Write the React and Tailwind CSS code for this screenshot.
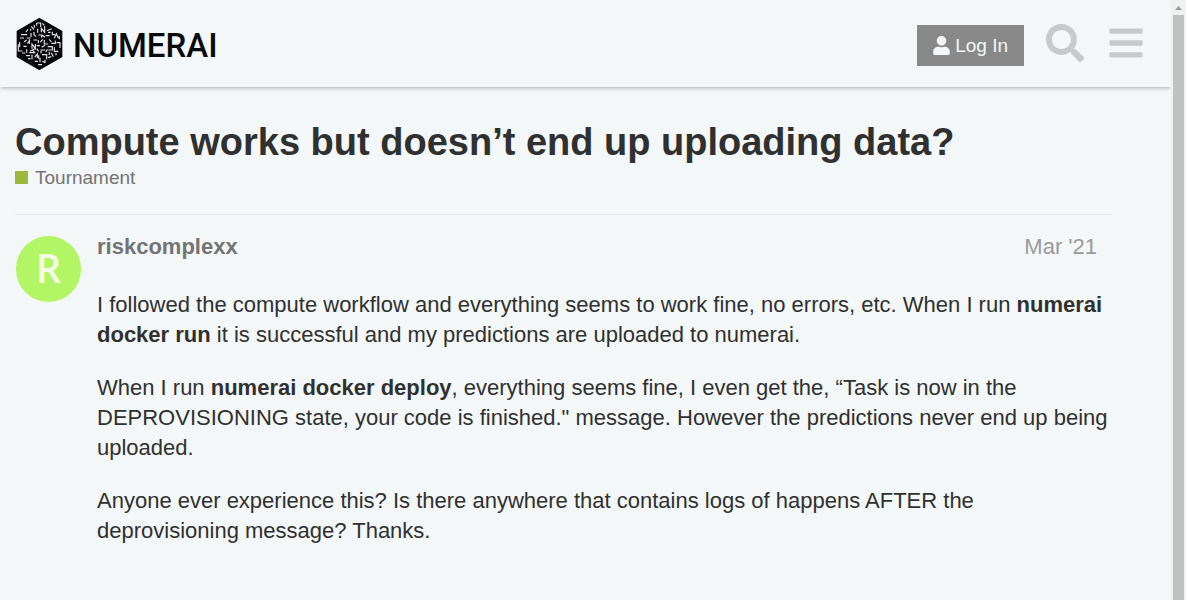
import React from "react";
import { FaUser, FaSearch, FaBars } from "react-icons/fa";

function LogoMark() {
  return (
    <svg viewBox="18 12 141 156" className="h-[52px] w-[47px]" aria-hidden="true">
      <path
        d="M88 14 155 52V128L88 166 22 128V52Z"
        fill="#050708"
        stroke="#050708"
        strokeWidth="4"
        strokeLinejoin="round"
      />
      <path
        d="M80 27h12v12M80 27v8M73 33v8M64 37l8 10M62 44v6M97 28l6 6M104 36v8M94 55V43l10 12V43M83 44v12M111 50l14-6M114 55h8M33 62h18M54 46l-6 8M30 72h12M50 72h12M63 57v12M72 54v8l6 6M85 63h10v8M97 64l8 6M107 65h12M127 53v9h8M133 73l6-14 6 14M148 66v10M29 100V84M25 91v20h12M40 97h10M42 84l8-6M52 88l8-10M58 76v14M66 104V90l10 14V90M70 78h12M85 78v10M91 84l8-8M103 78v12h12M118 76l6 8M124 88h12v-8M140 86h10v16M80 95h10M95 100l10-6M92 108h14M113 98h14v10h-12M133 100v12h12M112 106l-4 8M60 112l14-8M36 117h10M50 106v10M58 116h16l-6-8M80 104l6 8M93 118v-8M96 122h14v14M118 113v10M124 116l6 12M138 116v8M48 125h12M66 122v14M74 130l8-10v12M86 124v10M54 134h8M74 142h10M90 131v14M97 142l8 4M114 131l10-3M84 152h12M105 137v10"
        fill="none"
        stroke="#dfe2e3"
        strokeWidth="3.5"
      />
    </svg>
  );
}

function Header() {
  return (
    <header className="flex h-[87px] items-center justify-between pl-4 pr-[26px] shadow-[0_2px_4px_-1px_rgba(0,0,0,0.3)]">
      <a href="/" className="flex items-center gap-2.5 text-[#080a0b]" aria-label="Numerai">
        <LogoMark />
        <span className="pt-1 font-[Roboto,sans-serif] text-[33px] font-medium leading-none">NUMERAI</span>
      </a>
      <div className="flex items-center gap-[22px]">
        <button
          type="button"
          className="mt-1 flex h-[41px] items-center gap-[5px] bg-[#888888] px-4 text-[19px] text-[#f3f7f8]"
        >
          <FaUser className="h-[19px] w-[17px]" aria-hidden="true" />
          <span className="pt-px">Log In</span>
        </button>
        <div className="flex items-center gap-[23px] pb-px">
          <button type="button" aria-label="Search" className="text-[#c7c9ca]">
            <FaSearch className="size-[38px]" />
          </button>
          <button type="button" aria-label="Menu" className="text-[#c7c9ca]">
            <FaBars className="size-[38px]" />
          </button>
        </div>
      </div>
    </header>
  );
}

function Post() {
  return (
    <article className="flex gap-4 border-t border-[#e6e8e9] pt-[21px]">
      <div className="ml-px flex h-[66px] w-[65px] shrink-0 items-center justify-center rounded-full bg-[#b3f665] pb-0.5 font-['Open_Sans',sans-serif] text-[40px] font-semibold leading-[64px] text-[#f2fde6]">
        R
      </div>
      <div className="min-w-0 flex-1">
        <div className="flex h-5 items-center justify-between pr-[15px] text-[22px]">
          <a href="/u/riskcomplexx" className="font-bold text-[#737474]">
            riskcomplexx
          </a>
          <a href="#post-1" className="text-[#999b9b]">
            Mar '21
          </a>
        </div>
        <div className="flex flex-col gap-[23px] pt-[34px] text-[22px] leading-[30px]">
          <p>
            I followed the compute workflow and everything seems to work fine, no errors, etc. When I run{" "}
            <strong>numerai docker run</strong> it is successful and my predictions are uploaded to numerai.
          </p>
          <p>
            When I run <strong>numerai docker deploy</strong>, everything seems fine, I even get the, “Task is now in
            the DEPROVISIONING state, your code is finished." message. However the predictions never end up being
            uploaded.
          </p>
          <p>
            Anyone ever experience this? Is there anywhere that contains logs of happens AFTER the deprovisioning
            message? Thanks.
          </p>
        </div>
      </div>
    </article>
  );
}

export default function App() {
  return (
    <div className="flex min-h-screen bg-[#f3f7f8] font-['Liberation_Sans',Arial,sans-serif] text-[#303030]">
      <div className="min-w-0 flex-1">
        <Header />
        <main className="pl-[15px] pr-[59px] pt-8">
          <h1 className="text-[38px] font-bold leading-[46px]">Compute works but doesn’t end up uploading data?</h1>
          <a href="/c/tournament" className="mb-6 flex items-center gap-[7px] text-[19px] leading-[25px] text-[#737474]">
            <span className="size-[13px] bg-[#9eb83b]" />
            Tournament
          </a>
          <Post />
        </main>
      </div>
      <div className="flex w-[15px] shrink-0 flex-col items-center bg-[#f0f0f1]" aria-hidden="true">
        <svg viewBox="0 0 15 15" className="size-[15px] shrink-0">
          <path d="M4 10 7.500 6 11 10Z" fill="#9c9c9c" />
        </svg>
        <div className="w-[11px] flex-1 bg-[#c1c1c1]" />
      </div>
    </div>
  );
}
